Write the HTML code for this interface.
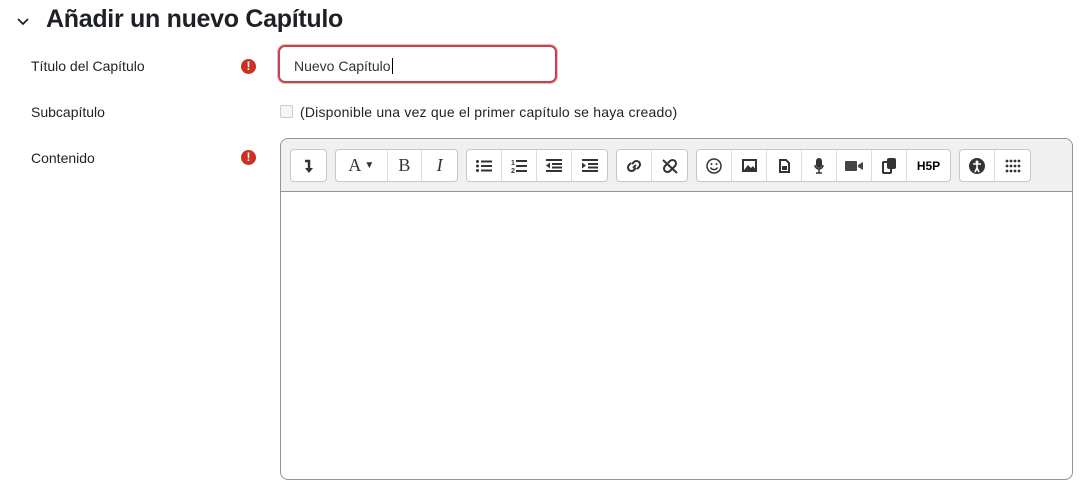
<!DOCTYPE html>
<html><head><meta charset="utf-8"><style>
body{margin:0;width:1091px;height:452px;overflow:hidden;background:#fff;font-family:"Liberation Sans",sans-serif;color:#1d2125;position:relative}
.a{position:absolute}
.lbl{font-size:14px;color:#1d2125}
.err{width:15px;height:15px;border-radius:50%;background:#ca3120;color:#fff;font-weight:bold;font-size:12px;text-align:center;line-height:15px}
.grp{position:absolute;top:149px;height:31px;border:1px solid #c7c7c7;border-radius:4px;background:#fff;display:flex;overflow:hidden}
.grp div{height:31px;border-right:1px solid #ddd;display:flex;align-items:center;justify-content:center;color:#333;font-size:16px}
.grp div:last-child{border-right:none}
svg{display:block}
</style></head><body>
<svg class="a" style="left:16px;top:17px" width="14" height="10" viewBox="0 0 14 10"><path d="M2 2l5 5 5-5" stroke="#1d2125" stroke-width="1.8" fill="none"/></svg>
<div class="a" style="left:46px;top:5px;font-size:25px;font-weight:bold;letter-spacing:-0.3px">Añadir un nuevo Capítulo</div>
<div class="a lbl" style="left:31px;top:58px">Título del Capítulo</div>
<div class="a err" style="left:241px;top:59px">!</div>
<div class="a" style="left:278px;top:45px;width:275px;height:34px;border:2px solid #c6424f;border-radius:7px;box-shadow:0 0 0 1px #e9b9be"></div>
<div class="a lbl" style="left:294px;top:58px;color:#333">Nuevo Capítulo<span style="border-left:1px solid #000;margin-left:1px"></span></div>
<div class="a lbl" style="left:31px;top:104px">Subcapítulo</div>
<div class="a" style="left:280px;top:105px;width:11px;height:11px;border:1px solid #ccc;border-radius:2px;background:#f5f5f5"></div>
<div class="a lbl" style="left:300px;top:104px;letter-spacing:0.2px">(Disponible una vez que el primer capítulo se haya creado)</div>
<div class="a lbl" style="left:31px;top:150px">Contenido</div>
<div class="a err" style="left:241px;top:150px">!</div>
<div class="a" style="left:280px;top:138px;width:791px;height:340px;border:1px solid #8f959e;border-radius:8px"></div>
<div class="a" style="left:281px;top:139px;width:791px;height:52px;background:#f0f0f0;border-bottom:1px solid #8f959e;border-radius:8px 8px 0 0"></div>
<div class="grp" style="left:290px;width:35px"><div style="width:35px"><svg width="10" height="16"><path d="M1 3h4v9" stroke="#333" stroke-width="2.5" fill="none"/><path d="M1 10l4 5 4-5z" fill="#333"/></svg></div></div>
<div class="grp" style="left:335px;width:121px"><div style="width:51px;font-family:'Liberation Serif';font-size:18px">A<span style="font-size:10px;margin-left:3px">▼</span></div><div style="width:34px;font-family:'Liberation Serif';font-size:18px">B</div><div style="width:35px;font-family:'Liberation Serif';font-style:italic;font-size:18px">I</div></div>
<div class="grp" style="left:466px;width:140px">
<div style="width:34px"><svg width="16" height="12"><g fill="#333"><circle cx="1.5" cy="1.5" r="1.5"/><circle cx="1.5" cy="6" r="1.5"/><circle cx="1.5" cy="10.5" r="1.5"/><rect x="5" y="0.5" width="11" height="2"/><rect x="5" y="5" width="11" height="2"/><rect x="5" y="9.5" width="11" height="2"/></g></svg></div>
<div style="width:34px"><svg width="16" height="14"><text x="0" y="6" font-size="7" font-weight="bold" fill="#333">1</text><text x="0" y="14" font-size="7" font-weight="bold" fill="#333">2</text><g fill="#333"><rect x="5" y="1" width="11" height="2"/><rect x="5" y="6" width="11" height="2"/><rect x="5" y="11" width="11" height="2"/></g></svg></div>
<div style="width:34px"><svg width="16" height="13"><g fill="#333"><rect x="0" y="0" width="16" height="2"/><rect x="6" y="4" width="10" height="2"/><rect x="6" y="7.5" width="10" height="2"/><rect x="0" y="11" width="16" height="2"/><path d="M0 6.5l4-3v6z"/></g></svg></div>
<div style="width:35px"><svg width="16" height="13"><g fill="#333"><rect x="0" y="0" width="16" height="2"/><rect x="6" y="4" width="10" height="2"/><rect x="6" y="7.5" width="10" height="2"/><rect x="0" y="11" width="16" height="2"/><path d="M4 6.5l-4-3v6z"/></g></svg></div></div>
<div class="grp" style="left:616px;width:70px"><div style="width:34px"><svg width="18" height="14"><path d="M8 9l3-3M7 5l2-2a3 3 0 0 1 5 5l-2 2M11 9l-2 2a3 3 0 0 1-5-5l2-2" stroke="#333" stroke-width="2" fill="none"/></svg></div><div style="width:35px"><svg width="18" height="16"><path d="M7 5l2-2a3 3 0 0 1 5 5l-2 2M11 11l-2 2a3 3 0 0 1-5-5l2-2M2 2l14 13" stroke="#333" stroke-width="2" fill="none"/></svg></div></div>
<div class="grp" style="left:696px;width:253px"><div style="width:34px"><svg width="16" height="16"><circle cx="8" cy="8" r="7" fill="none" stroke="#333" stroke-width="1.5"/><circle cx="5.5" cy="6" r="1" fill="#333"/><circle cx="10.5" cy="6" r="1" fill="#333"/><path d="M4.5 9.5a4 4 0 0 0 7 0" stroke="#333" stroke-width="1.5" fill="none"/></svg></div><div style="width:34px"><svg width="15" height="13"><rect x="1" y="1" width="13" height="11" fill="none" stroke="#333" stroke-width="2"/><path d="M2 11l4-5 3 3 2-2 3 4z" fill="#333"/></svg></div><div style="width:34px"><svg width="11" height="14"><path d="M1 1h6l3 3v9H1z" fill="none" stroke="#333" stroke-width="2"/><rect x="3" y="7" width="5" height="4" fill="#333"/></svg></div><div style="width:34px"><svg width="10" height="16"><rect x="2" y="0" width="6" height="10" rx="3" fill="#333"/><path d="M1 7a4 4 0 0 0 8 0M5 11v4M2 15h6" stroke="#333" fill="none" stroke-width="1.5"/></svg></div><div style="width:34px"><svg width="18" height="12"><rect x="0" y="1" width="12" height="10" rx="1" fill="#444"/><path d="M13 5l5-3v8l-5-3z" fill="#444"/></svg></div><div style="width:34px"><svg width="14" height="16"><rect x="1" y="4" width="8" height="11" rx="1" fill="none" stroke="#333" stroke-width="2"/><rect x="5" y="0" width="9" height="11" rx="2" fill="#333"/></svg></div><div style="width:43px;font-size:12px;font-weight:bold;color:#000">H5P</div></div>
<div class="grp" style="left:959px;width:70px"><div style="width:34px"><svg width="16" height="16"><circle cx="8" cy="8" r="8" fill="#333"/><circle cx="8" cy="4" r="1.5" fill="#fff"/><path d="M4 6h8M8 6v4l-2 4M8 10l2 4" stroke="#fff" stroke-width="1.6" fill="none"/></svg></div><div style="width:35px"><svg width="16" height="14"><g fill="#333"><circle cx="2" cy="2" r="1.4"/><circle cx="6" cy="2" r="1.4"/><circle cx="10" cy="2" r="1.4"/><circle cx="14" cy="2" r="1.4"/><circle cx="2" cy="7" r="1.4"/><circle cx="6" cy="7" r="1.4"/><circle cx="10" cy="7" r="1.4"/><circle cx="14" cy="7" r="1.4"/><circle cx="2" cy="12" r="1.4"/><circle cx="6" cy="12" r="1.4"/><circle cx="10" cy="12" r="1.4"/><circle cx="14" cy="12" r="1.4"/></g></svg></div></div>
</body></html>
